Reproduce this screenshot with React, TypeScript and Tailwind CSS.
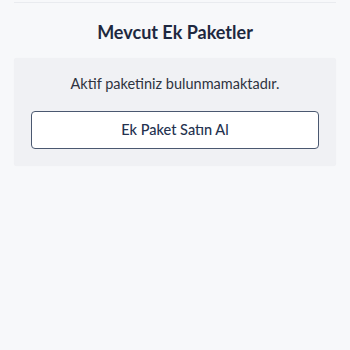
export default function App() {
  return (
    <div className="min-h-[350px] w-[350px] bg-[#f7f8fa] px-[14px]" style={{ fontFamily: 'Lato, "Noto Sans", sans-serif' }}>
      <div className="h-[3px] border-b border-[#e9ebef]"></div>
      <h2 className="mt-[17px] text-center text-[18px] font-bold leading-[24px] text-[#1e2840]">Mevcut Ek Paketler</h2>
      <div className="mt-[14px] rounded-[3px] bg-[#f0f1f4] px-[17px] pb-[17px] pt-[15px] shadow-[0_0_1px_rgba(0,0,0,0.05)]">
        <p className="text-center text-[14.5px] leading-[22px] text-[#2e3340]">Aktif paketiniz bulunmamaktadır.</p>
        <button className="mt-[16px] flex h-[38px] w-full items-center justify-center rounded-[4px] border border-[#4a5870] bg-white text-[14.5px] font-medium text-[#24324f]">Ek Paket Satın Al</button>
      </div>
    </div>
  );
}
